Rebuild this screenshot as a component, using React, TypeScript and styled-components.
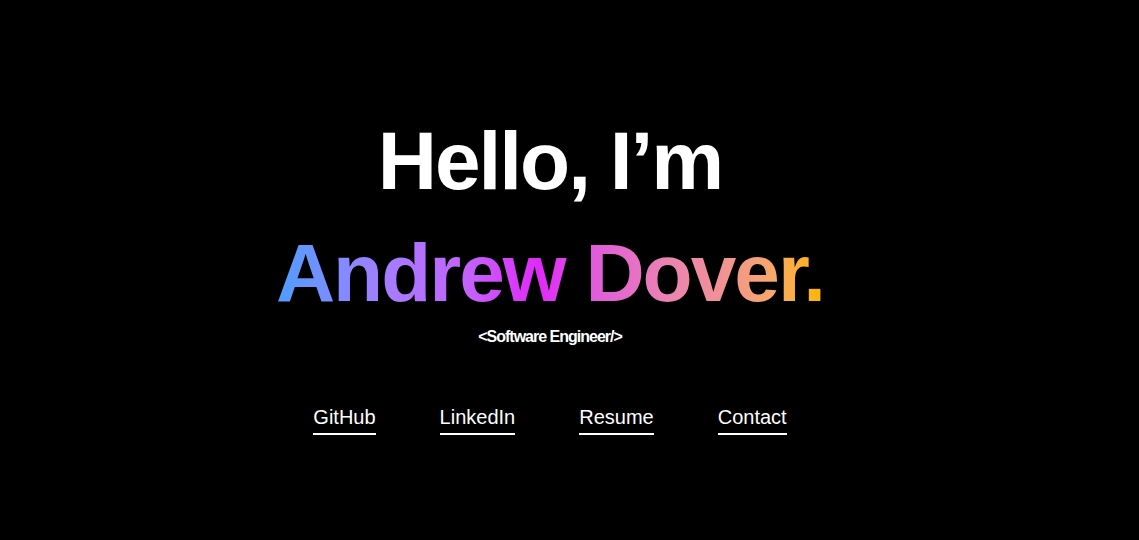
import React from "react";
import styled, { createGlobalStyle } from "styled-components";

const GlobalStyle = createGlobalStyle`
  html, body {
    margin: 0;
    padding: 0;
    background: #000;
  }
  body {
    font-family: "Liberation Sans", Arial, sans-serif;
    color: #fff;
  }
`;

const Page = styled.main`
  min-height: 100vh;
  box-sizing: border-box;
  padding: 0 39px 0 0;
  display: flex;
  flex-direction: column;
  align-items: center;
  justify-content: center;
`;

const Title = styled.h1`
  margin: 0;
  font-size: 82px;
  font-weight: 700;
  letter-spacing: -2px;
  line-height: 1.36;
  text-align: center;
`;

const Name = styled.span`
  display: inline-block;
  background: linear-gradient(
    90deg,
    #4e9eff 0%,
    #a57dff 20%,
    #c462fb 35%,
    #e02af8 48%,
    #e05cdc 58%,
    #ec84b0 72%,
    #f0909a 80%,
    #f8a868 91%,
    #ffb800 100%
  );
  -webkit-background-clip: text;
  background-clip: text;
  color: transparent;
`;

const Role = styled.p`
  margin: 0;
  font-size: 16px;
  font-weight: 700;
  letter-spacing: -1px;
`;

const Links = styled.nav`
  display: flex;
  gap: 64px;
  margin-top: 60px;
`;

const NavLink = styled.a`
  color: #fff;
  text-decoration: none;
  font-size: 20px;
  padding-bottom: 4px;
  border-bottom: 2px solid #fff;
`;

const links = ["GitHub", "LinkedIn", "Resume", "Contact"];

export default function App() {
  return (
    <>
      <GlobalStyle />
      <Page>
        <Title>
          Hello, I’m
          <br />
          <Name>Andrew Dover.</Name>
        </Title>
        <Role>&lt;Software Engineer/&gt;</Role>
        <Links>
          {links.map((l) => (
            <NavLink key={l} href="#">
              {l}
            </NavLink>
          ))}
        </Links>
      </Page>
    </>
  );
}
